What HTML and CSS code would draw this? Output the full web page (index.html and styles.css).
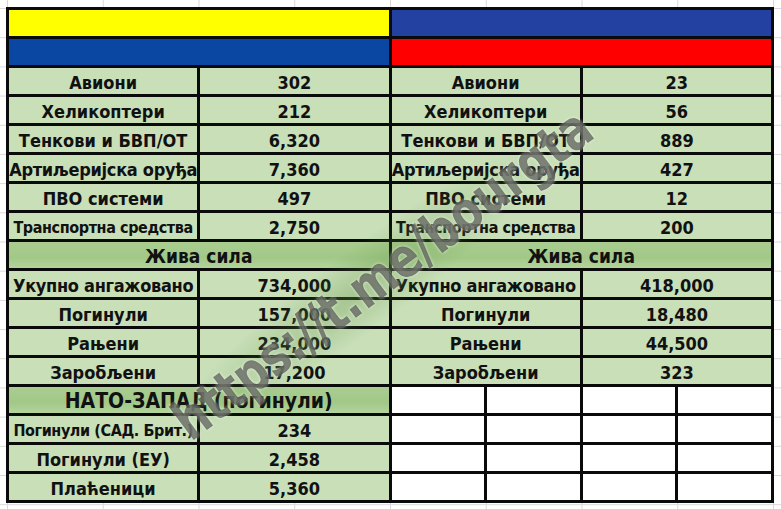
FILE: index.html
```html
<!DOCTYPE html>
<html lang="sr">
<head>
<meta charset="utf-8">
<title>Табела губитака</title>
<link rel="stylesheet" href="styles.css">
</head>
<body>
<div class="sheet">
  <div class="table">
    <div class="cell span4 yellow"></div>
    <div class="cell span4 blue2"></div>
    <div class="cell span4 blue"></div>
    <div class="cell span4 red"></div>

    <div class="cell span2">Авиони</div><div class="cell span2">302</div>
    <div class="cell span2">Авиони</div><div class="cell span2">23</div>

    <div class="cell span2">Хеликоптери</div><div class="cell span2">212</div>
    <div class="cell span2">Хеликоптери</div><div class="cell span2">56</div>

    <div class="cell span2">Тенкови и БВП/ОТ</div><div class="cell span2">6,320</div>
    <div class="cell span2">Тенкови и БВП/ОТ</div><div class="cell span2">889</div>

    <div class="cell span2 tight">Артиљеријска оруђа</div><div class="cell span2">7,360</div>
    <div class="cell span2 tight">Артиљеријска оруђа</div><div class="cell span2">427</div>

    <div class="cell span2">ПВО системи</div><div class="cell span2">497</div>
    <div class="cell span2">ПВО системи</div><div class="cell span2">12</div>

    <div class="cell span2 small">Транспортна средства</div><div class="cell span2">2,750</div>
    <div class="cell span2 small">Транспортна средства</div><div class="cell span2">200</div>

    <div class="cell span4 head">Жива сила</div>
    <div class="cell span4 head">Жива сила</div>

    <div class="cell span2 tight">Укупно ангажовано</div><div class="cell span2">734,000</div>
    <div class="cell span2 tight">Укупно ангажовано</div><div class="cell span2">418,000</div>

    <div class="cell span2">Погинули</div><div class="cell span2">157,000</div>
    <div class="cell span2">Погинули</div><div class="cell span2">18,480</div>

    <div class="cell span2">Рањени</div><div class="cell span2">234,000</div>
    <div class="cell span2">Рањени</div><div class="cell span2">44,500</div>

    <div class="cell span2">Заробљени</div><div class="cell span2">17,200</div>
    <div class="cell span2">Заробљени</div><div class="cell span2">323</div>

    <div class="cell span4 head big">НАТО-ЗАПАД (погинули)</div>
    <div class="cell empty"></div><div class="cell empty"></div><div class="cell empty"></div><div class="cell empty"></div>

    <div class="cell span2 small">Погинули (САД. Брит.)</div><div class="cell span2">234</div>
    <div class="cell empty"></div><div class="cell empty"></div><div class="cell empty"></div><div class="cell empty"></div>

    <div class="cell span2">Погинули (ЕУ)</div><div class="cell span2">2,458</div>
    <div class="cell empty"></div><div class="cell empty"></div><div class="cell empty"></div><div class="cell empty"></div>

    <div class="cell span2">Плаћеници</div><div class="cell span2">5,360</div>
    <div class="cell empty"></div><div class="cell empty"></div><div class="cell empty"></div><div class="cell empty"></div>
  </div>
  <div class="smear"></div>
  <div class="watermark">https://t.me/bourgta</div>
</div>
</body>
</html>
```
FILE: styles.css
```css
html, body {
  margin: 0;
  padding: 0;
}
body {
  width: 781px;
  height: 509px;
  overflow: hidden;
  background-color: #fff;
  background-image:
    linear-gradient(to right, #d9d9d9 1px, transparent 1px),
    linear-gradient(to bottom, #d9d9d9 1px, transparent 1px);
  background-size: 95.75px 29.2px;
  background-position: 7px 8px;
  font-family: "DejaVu Sans Condensed", "DejaVu Sans", sans-serif;
  font-weight: bold;
  color: #111;
}
.sheet {
  position: relative;
  padding: 7px 0 0 6px;
}
.table {
  width: 768px;
  display: grid;
  grid-template-columns: repeat(8, 1fr);
  grid-auto-rows: 26px;
  gap: 3px;
  padding: 3px;
  box-sizing: border-box;
  background: #0a0a0a;
}
.cell {
  background: #c8dfb8;
  display: flex;
  align-items: center;
  justify-content: center;
  padding-top: 3px;
  box-sizing: border-box;
  font-size: 18px;
  white-space: nowrap;
  overflow: visible;
  line-height: 1;
}
.span2 { grid-column: span 2; }
.span4 { grid-column: span 4; }
.yellow { background: #ffff00; }
.blue { background: #0a47a3; }
.blue2 { background: #2341a0; }
.red { background: #ff0000; }
.head {
  background: linear-gradient(to bottom, #a9cd90, #a2c888 60%, #b3d49c);
  font-size: 19px;
}
.big { font-size: 21px; }
.tight { letter-spacing: -0.3px; }
.small { font-size: 16px; letter-spacing: -0.4px; }
.empty { background: #fff; }
.smear {
  position: absolute;
  left: 175px;
  top: 390px;
  width: 470px;
  height: 80px;
  transform: rotate(-37deg);
  transform-origin: left center;
  background: radial-gradient(ellipse at center, rgba(100,150,70,0.35), rgba(100,150,70,0) 70%);
  pointer-events: none;
}
.watermark {
  position: absolute;
  left: 180px;
  top: 400px;
  transform: rotate(-37deg) scaleY(1.12);
  transform-origin: left center;
  font-family: "DejaVu Sans Condensed", sans-serif;
  font-weight: bold;
  font-size: 49px;
  line-height: 56px;
  letter-spacing: 0;
  color: rgba(55, 60, 50, 0.62);
  text-shadow: 0 0 3px rgba(255,255,255,0.7);
  white-space: nowrap;
  pointer-events: none;
}
```
